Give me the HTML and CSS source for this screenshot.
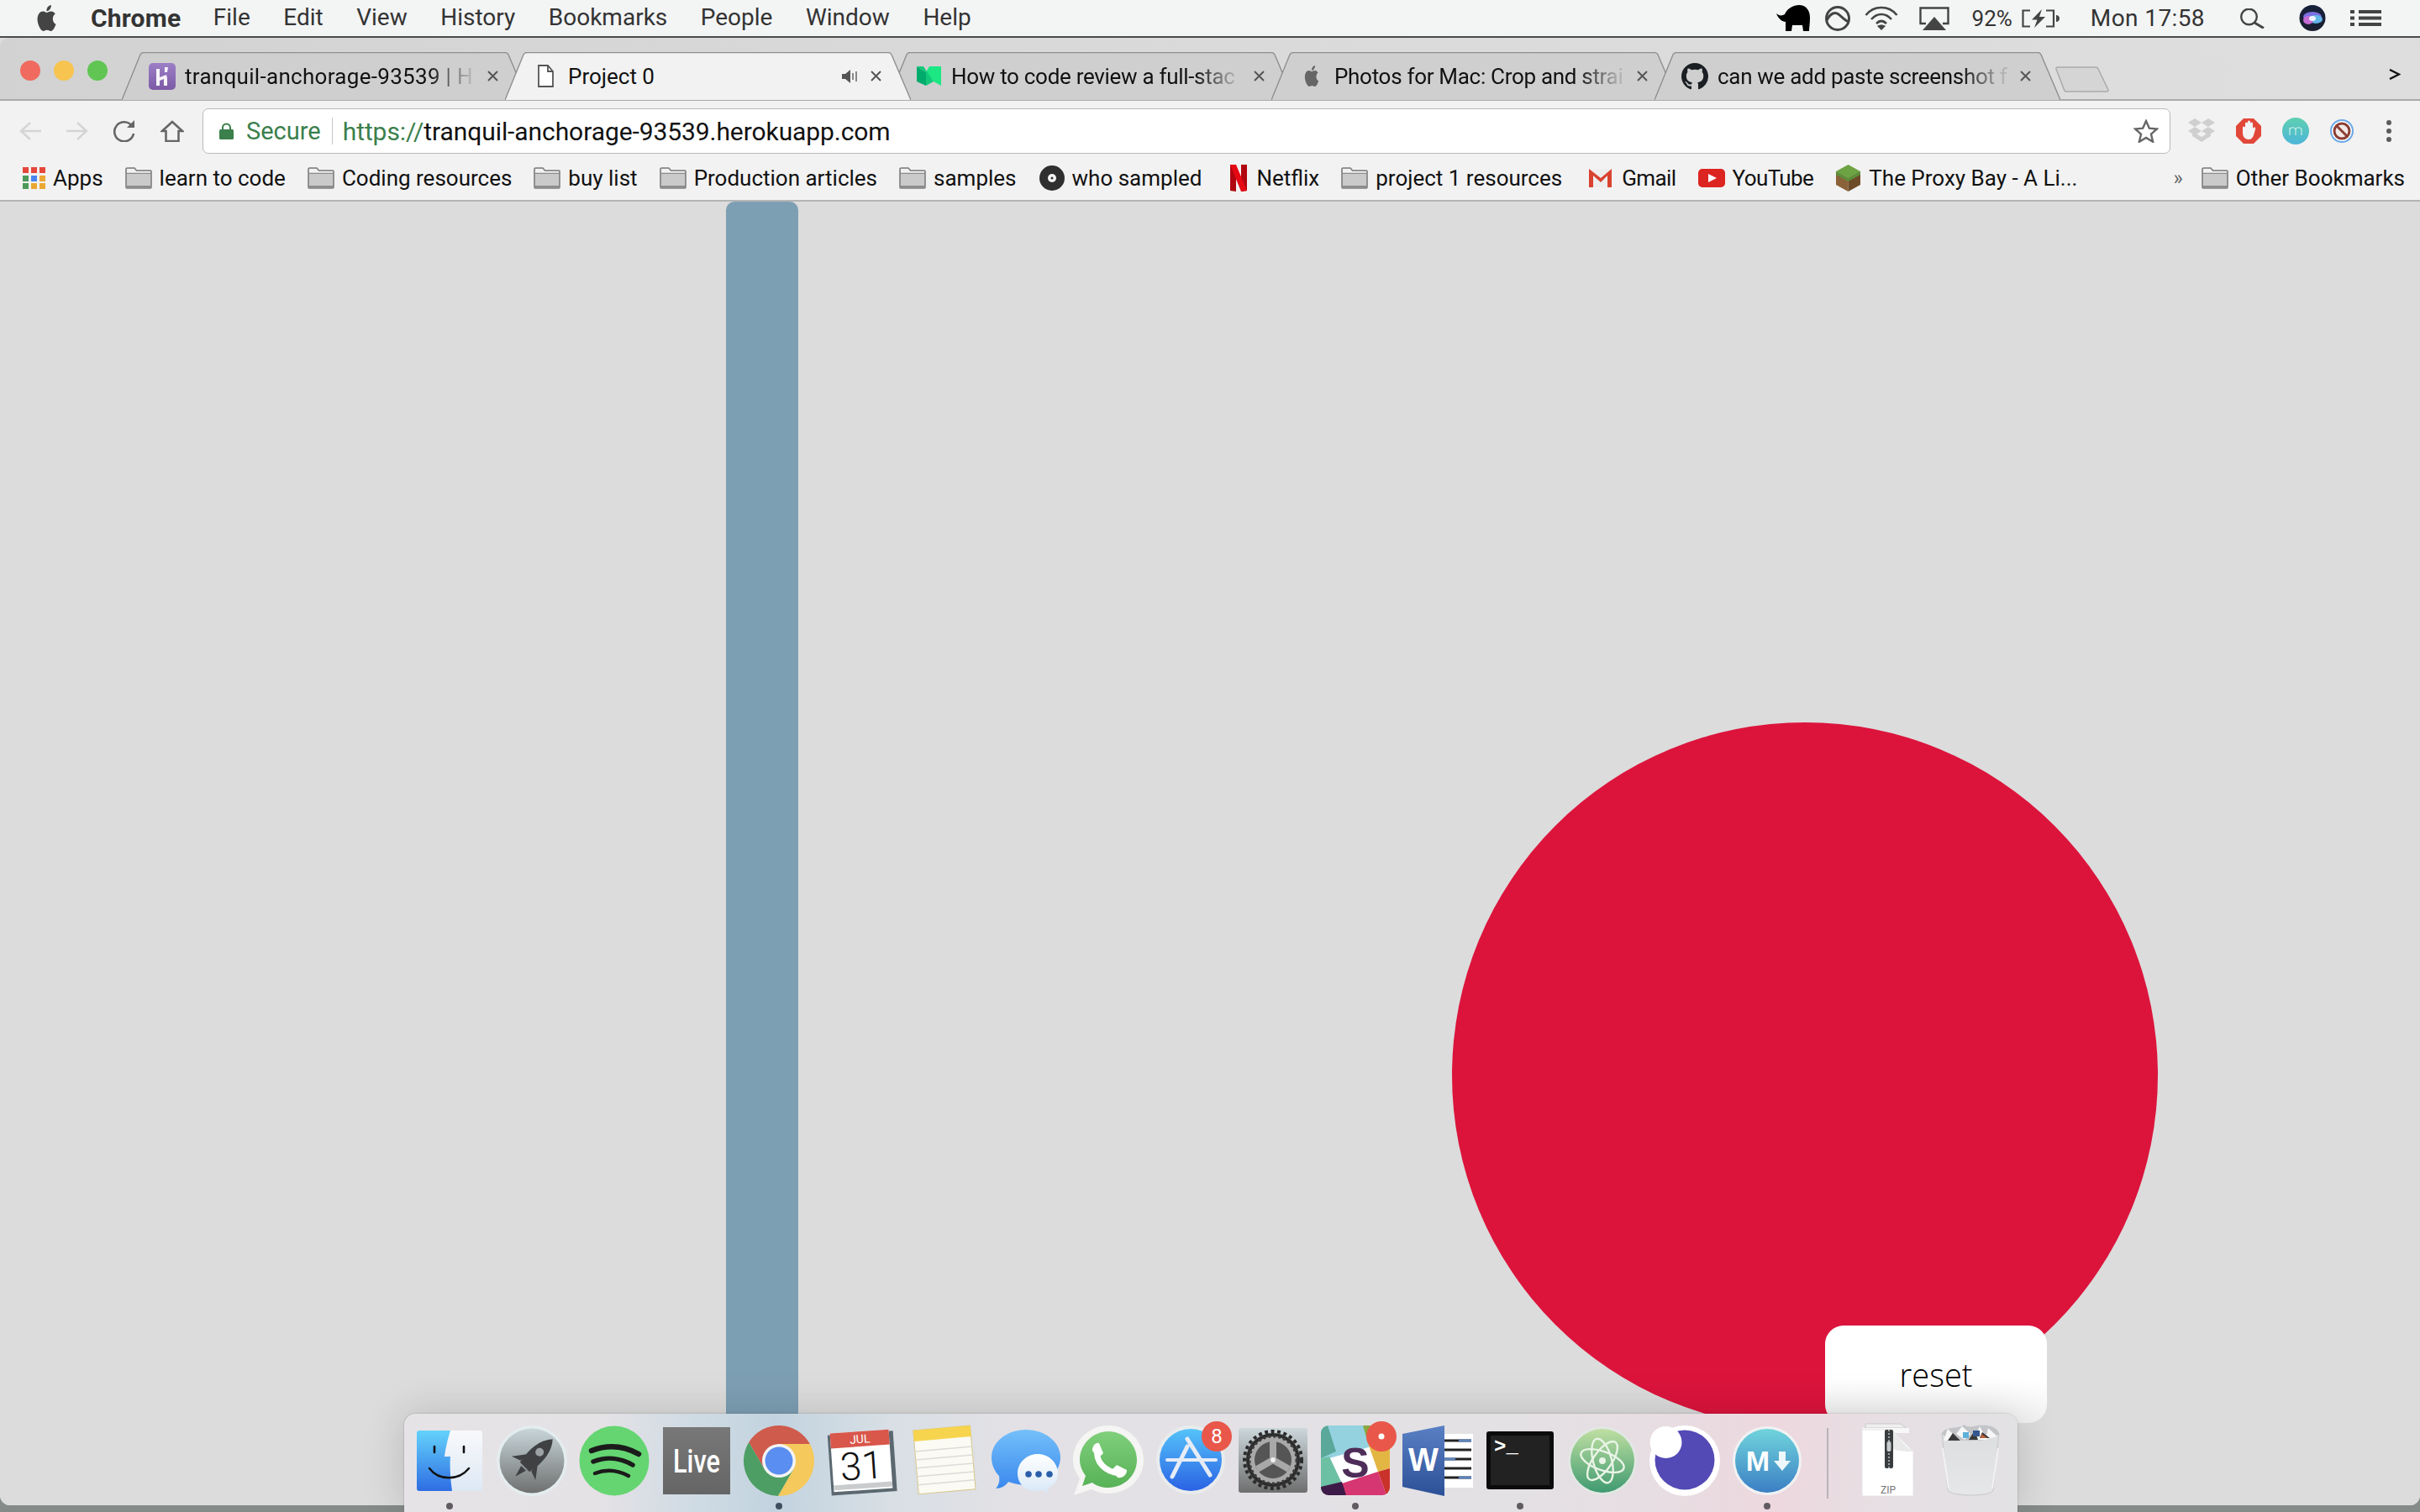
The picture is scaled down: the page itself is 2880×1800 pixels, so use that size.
FILE: index.html
```html
<!DOCTYPE html>
<html lang="en">
<head>
<meta charset="utf-8">
<title>Project 0</title>
<link rel="stylesheet" href="styles.css">
</head>
<body>
<svg class="defs" width="0" height="0">
  <defs>
    <symbol id="folder" viewBox="0 0 32 26">
      <path d="M1 24V2.5C1 1.6 1.6 1 2.5 1H11l2.5 3H30c.6 0 1 .4 1 1v19c0 .6-.4 1-1 1H2c-.6 0-1-.4-1-1z" fill="#cacaca" stroke="#7d7d7d" stroke-width="1.6"/>
      <path d="M2 2h8.6l2.4 3h17v2H2z" fill="#f2f2f2"/>
      <path d="M1.8 7.4h28.4" stroke="#8a8a8a" stroke-width="1.2"/>
      <path d="M2 22h28v2.2H2z" fill="#8c8c8c"/>
    </symbol>
    <symbol id="close" viewBox="0 0 15 15">
      <path d="M2 2l11 11M13 2L2 13" stroke="#555" stroke-width="2" fill="none"/>
    </symbol>
    <linearGradient id="gFinderL" x1="0" y1="0" x2="0" y2="1"><stop offset="0" stop-color="#64d2fb"/><stop offset="1" stop-color="#2e6de3"/></linearGradient>
    <linearGradient id="gFinderR" x1="0" y1="0" x2="0" y2="1"><stop offset="0" stop-color="#f8f9fb"/><stop offset="1" stop-color="#dde8f5"/></linearGradient>
    <linearGradient id="gRocket" x1="0" y1="0" x2="0" y2="1"><stop offset="0" stop-color="#c8d6d9"/><stop offset="1" stop-color="#6f7070"/></linearGradient>
    <linearGradient id="gLive" x1="0" y1="0" x2="0" y2="1"><stop offset="0" stop-color="#787878"/><stop offset="1" stop-color="#656565"/></linearGradient>
    <linearGradient id="gMsg" x1="0" y1="0" x2="0" y2="1"><stop offset="0" stop-color="#75c0fa"/><stop offset="1" stop-color="#3a88ee"/></linearGradient>
    <linearGradient id="gMsgW" x1="0" y1="0" x2="0" y2="1"><stop offset="0" stop-color="#fff"/><stop offset="1" stop-color="#d8e8f8"/></linearGradient>
    <linearGradient id="gWa" x1="0" y1="0" x2="0" y2="1"><stop offset="0" stop-color="#80cf7c"/><stop offset="1" stop-color="#57b256"/></linearGradient>
    <linearGradient id="gStore" x1="0" y1="0" x2="0" y2="1"><stop offset="0" stop-color="#55c3fa"/><stop offset="1" stop-color="#2a62e4"/></linearGradient>
    <linearGradient id="gPrefs" x1="0" y1="0" x2="0" y2="1"><stop offset="0" stop-color="#cdd8dc"/><stop offset="1" stop-color="#6e6e6e"/></linearGradient>
    <linearGradient id="gWord" x1="0" y1="0" x2="0" y2="1"><stop offset="0" stop-color="#5a80c4"/><stop offset="1" stop-color="#2c5097"/></linearGradient>
    <linearGradient id="gAtom" x1="0" y1="0" x2="0" y2="1"><stop offset="0" stop-color="#bfdfa2"/><stop offset="1" stop-color="#3f9a70"/></linearGradient>
    <linearGradient id="gMd" x1="0" y1="0" x2="0" y2="1"><stop offset="0" stop-color="#70d4dc"/><stop offset="1" stop-color="#3b7fc4"/></linearGradient>
    <linearGradient id="gTrash" x1="0" y1="0" x2="0" y2="1"><stop offset="0" stop-color="#dcdddf"/><stop offset="1" stop-color="#e6e7e8"/></linearGradient>
    <linearGradient id="gHeroku" x1="0" y1="0" x2="0" y2="1"><stop offset="0" stop-color="#9c7fc6"/><stop offset="1" stop-color="#7c5aa6"/></linearGradient>
    <linearGradient id="gTeal" x1="0" y1="0" x2="0" y2="1"><stop offset="0" stop-color="#5fcfb0"/><stop offset="1" stop-color="#4cb6d8"/></linearGradient>
    <linearGradient id="gSiri" x1="0" y1="0" x2="0" y2="1"><stop offset="0" stop-color="#15203a"/><stop offset="1" stop-color="#1b1f30"/></linearGradient>
    <clipPath id="slackClip"><rect x="4" y="3" width="82" height="83" rx="9"/></clipPath>
  </defs>
</svg>

<header class="menubar">
  <svg class="apple" width="27" height="31" viewBox="0 0 24 24" preserveAspectRatio="none"><path fill="#444" d="M12.152 6.896c-.948 0-2.415-1.078-3.96-1.04-2.04.027-3.91 1.183-4.961 3.014-2.117 3.675-.546 9.103 1.519 12.09 1.013 1.454 2.208 3.09 3.792 3.039 1.52-.065 2.09-.987 3.935-.987 1.831 0 2.35.987 3.96.948 1.637-.026 2.676-1.48 3.676-2.948 1.156-1.688 1.636-3.325 1.662-3.415-.039-.013-3.182-1.221-3.22-4.857-.026-3.04 2.48-4.494 2.597-4.559-1.429-2.09-3.623-2.324-4.39-2.376-2-.156-3.675 1.09-4.61 1.09zM15.53 3.83c.843-1.012 1.4-2.427 1.245-3.83-1.207.052-2.662.805-3.532 1.818-.78.896-1.454 2.338-1.273 3.714 1.338.104 2.715-.688 3.559-1.701"/></svg>
  <nav class="menu">
    <span class="menu-app">Chrome</span><span>File</span><span>Edit</span><span>View</span><span>History</span><span>Bookmarks</span><span>People</span><span>Window</span><span>Help</span>
  </nav>
  <div class="status">
    <svg width="40" height="31" viewBox="0 0 40 31"><path d="M0 10C3 13 7 13 10 11 13 4 20 0 27 0 35 0 40 6 40 15 40 22 39 27 39 31H32L31 24H19L18 31H11V20C7 20 2 16 0 10Z"/></svg>
    <svg class="st-18" width="30" height="30" viewBox="0 0 30 30"><circle cx="15" cy="15" r="13.5" fill="none" stroke="#444" stroke-width="3"/><path d="M2 17C7 8 12 7 16 10S24 18 28 19" fill="none" stroke="#444" stroke-width="3"/></svg>
    <svg class="st-17" width="40" height="29" viewBox="0 0 40 29"><g fill="none" stroke="#444" stroke-width="2.6"><path d="M1.5 11C11-1 29-1 38.5 11"/><path d="M8 16C15 8 25 8 32 16"/><path d="M14 21C18 17 22 17 26 21"/></g><path d="M20 29l-5-5c3-2 7-2 10 0z" fill="#444"/></svg>
    <svg class="st-25" width="36" height="28" viewBox="0 0 36 28"><path d="M8 20H1.500V1.500H34.500V20H28" fill="none" stroke="#444" stroke-width="2.400"/><path d="M18 12L32 28H4z" fill="#444"/></svg>
    <span class="st-27 st-batt">92%</span>
    <svg class="st-11" width="45" height="22" viewBox="0 0 45 22"><path d="M10 1.500H1.500V20.500H10M29 1.500H38V20.500H29" fill="none" stroke="#444" stroke-width="2.200"/><path d="M24 0L12 12.500H18.500L15 22 28 9H21z" fill="#444"/><path d="M41 7c2.500 0 4 2 4 4s-1.500 4-4 4z" fill="#444"/></svg>
    <span class="st-37 clock">Mon 17:58</span>
    <svg class="st-42" width="29" height="24" viewBox="0 0 29 24"><circle cx="10.500" cy="10" r="9.300" fill="none" stroke="#444" stroke-width="2.400"/><path d="M17 17L28 23.500" stroke="#444" stroke-width="3"/></svg>
    <svg class="st-41" width="32" height="31" viewBox="0 0 32 31"><circle cx="16" cy="15.500" r="15.500" fill="url(#gSiri)"/><ellipse cx="16" cy="14" rx="11" ry="6" fill="#7a6fe0"/><ellipse cx="20" cy="17" rx="8" ry="5" fill="#63b6e8"/><ellipse cx="11" cy="18" rx="6" ry="5" fill="#c56bd4"/><ellipse cx="16" cy="16" rx="4" ry="3" fill="#eef2ff"/></svg>
    <svg class="st-29" width="37" height="19" viewBox="0 0 37 19"><g fill="#444"><rect width="5" height="4"/><rect y="7.500" width="5" height="4"/><rect y="15" width="5" height="4"/><rect x="10" width="27" height="4"/><rect x="10" y="7.500" width="27" height="4"/><rect x="10" y="15" width="27" height="4"/></g></svg>
  </div>
</header>

<div class="window">
  <div class="tabstrip">
    <div class="lights"><i class="light red"></i><i class="light yellow"></i><i class="light green"></i></div>
    <div class="tabs">
      <div class="tab">
        <svg class="tab-shape" width="483" height="57" viewBox="0 0 483 57"><path d="M0 57L22 3Q23 .6 26 .6H456Q459 .6 460 3L483 57"/></svg>
        <span class="favicon"><svg width="32" height="32" viewBox="0 0 32 32"><rect width="32" height="32" rx="5" fill="url(#gHeroku)"/><path d="M9 7h4v10l8-3 1 4v9h-4v-8l-5 2v6H9zM19 5h4l-1 6h-3z" fill="#fff" opacity=".92"/></svg></span>
        <span class="tab-title">tranquil-anchorage-93539 | H</span>
        <svg class="tab-close" width="15" height="15"><use href="#close"/></svg>
      </div>
      <div class="tab active">
        <svg class="tab-shape" width="483" height="57" viewBox="0 0 483 57"><path d="M0 57L22 3Q23 .6 26 .6H456Q459 .6 460 3L483 57"/></svg>
        <span class="favicon"><svg width="19" height="27" viewBox="0 0 19 27"><path d="M1 1h11l6 7v18H1z" fill="#fff" stroke="#555" stroke-width="1.800"/><path d="M12 1v7h6" fill="none" stroke="#555" stroke-width="1.800"/></svg></span>
        <span class="tab-title solid">Project 0</span>
        <svg class="tab-speaker" width="19" height="18" viewBox="0 0 19 18"><path d="M0 6h4l6-5v16l-6-5H0z" fill="#555"/><path d="M13 5v8M17 3v12" stroke="#888" stroke-width="2"/></svg>
        <svg class="tab-close" width="15" height="15"><use href="#close"/></svg>
      </div>
      <div class="tab narrow">
        <svg class="tab-shape" width="483" height="57" viewBox="0 0 483 57"><path d="M0 57L22 3Q23 .6 26 .6H456Q459 .6 460 3L483 57"/></svg>
        <span class="favicon"><svg width="29" height="23" viewBox="0 0 29 23"><path d="M15 0h14v23l-9-5-9-11z" fill="#1ce783"/><path d="M0 0l11 7v16L0 18z" fill="#00ab6c"/><path d="M0 0h8l12 18-9 5V7z" fill="#12c97a"/></svg></span>
        <span class="tab-title">How to code review a full-stac</span>
        <svg class="tab-close" width="15" height="15"><use href="#close"/></svg>
      </div>
      <div class="tab narrow">
        <svg class="tab-shape" width="483" height="57" viewBox="0 0 483 57"><path d="M0 57L22 3Q23 .6 26 .6H456Q459 .6 460 3L483 57"/></svg>
        <span class="favicon"><svg width="20" height="25" viewBox="0 0 24 24" preserveAspectRatio="none"><path fill="#666" d="M12.152 6.896c-.948 0-2.415-1.078-3.96-1.04-2.04.027-3.91 1.183-4.961 3.014-2.117 3.675-.546 9.103 1.519 12.09 1.013 1.454 2.208 3.09 3.792 3.039 1.52-.065 2.09-.987 3.935-.987 1.831 0 2.35.987 3.96.948 1.637-.026 2.676-1.48 3.676-2.948 1.156-1.688 1.636-3.325 1.662-3.415-.039-.013-3.182-1.221-3.22-4.857-.026-3.04 2.48-4.494 2.597-4.559-1.429-2.09-3.623-2.324-4.39-2.376-2-.156-3.675 1.09-4.61 1.09zM15.53 3.83c.843-1.012 1.4-2.427 1.245-3.83-1.207.052-2.662.805-3.532 1.818-.78.896-1.454 2.338-1.273 3.714 1.338.104 2.715-.688 3.559-1.701"/></svg></span>
        <span class="tab-title">Photos for Mac: Crop and strai</span>
        <svg class="tab-close" width="15" height="15"><use href="#close"/></svg>
      </div>
      <div class="tab narrow">
        <svg class="tab-shape" width="483" height="57" viewBox="0 0 483 57"><path d="M0 57L22 3Q23 .6 26 .6H456Q459 .6 460 3L483 57"/></svg>
        <span class="favicon"><svg width="32" height="32" viewBox="0 0 16 16"><path fill="#1b1f23" d="M8 0C3.58 0 0 3.58 0 8c0 3.54 2.29 6.53 5.47 7.59.4.07.55-.17.55-.38 0-.19-.01-.82-.01-1.49-2.01.37-2.53-.49-2.69-.94-.09-.23-.48-.94-.82-1.13-.28-.15-.68-.52-.01-.53.63-.01 1.08.58 1.23.82.72 1.21 1.87.87 2.33.66.07-.52.28-.87.51-1.07-1.78-.2-3.64-.89-3.64-3.95 0-.87.31-1.59.82-2.15-.08-.2-.36-1.02.08-2.12 0 0 .67-.21 2.2.82.64-.18 1.32-.27 2-.27.68 0 1.36.09 2 .27 1.53-1.04 2.2-.82 2.2-.82.44 1.1.16 1.92.08 2.12.51.56.82 1.27.82 2.15 0 3.07-1.87 3.75-3.65 3.95.29.25.54.73.54 1.48 0 1.07-.01 1.93-.01 2.2 0 .21.15.46.55.38A8.013 8.013 0 0016 8c0-4.42-3.58-8-8-8z"/></svg></span>
        <span class="tab-title">can we add paste screenshot f</span>
        <svg class="tab-close" width="15" height="15"><use href="#close"/></svg>
      </div>
      <svg class="newtab" width="64" height="31" viewBox="0 0 64 31"><path d="M1 3Q.6 1 3 1H48Q50 1 51 3L63 28Q63.500 30 61 30H13Q11 30 10.500 28z" fill="#d5d5d5" stroke="#aaa" stroke-width="1.500"/></svg>
    </div>
    <svg class="tab-more" width="14" height="13" viewBox="0 0 14 13"><path d="M1 1l11 5.500L1 12" fill="none" stroke="#111" stroke-width="2.400"/></svg>
  </div>

  <div class="toolbar">
    <div class="nav">
      <svg width="27" height="24" viewBox="0 0 27 24"><path d="M26 12H3M13 2L2 12l11 10" fill="none" stroke="#d4d4d4" stroke-width="2.400"/></svg>
      <svg width="27" height="24" viewBox="0 0 27 24"><path d="M1 12h23M14 2l11 10-11 10" fill="none" stroke="#d4d4d4" stroke-width="2.400"/></svg>
      <svg width="30" height="26" viewBox="0 0 30 26"><path d="M24 7A11.500 11.500 0 1 0 26 16" fill="none" stroke="#666" stroke-width="2.600"/><path d="M18 9h9V0z" fill="#666"/></svg>
      <svg width="28" height="26" viewBox="0 0 28 26"><path d="M14 2L2 13h4.500v12h15V13H26z" fill="none" stroke="#666" stroke-width="2.600"/></svg>
    </div>
    <div class="omnibox">
      <svg class="lock" width="17" height="20" viewBox="0 0 17 20"><path d="M4 9V6a4.500 4.500 0 0 1 9 0v3" fill="none" stroke="#3b7f4c" stroke-width="2"/><rect y="8" width="17" height="12" rx="1.500" fill="#3b7f4c"/></svg>
      <span class="secure">Secure</span>
      <i class="omni-div"></i>
      <span class="url"><span class="scheme">https://</span>tranquil-anchorage-93539.herokuapp.com</span>
      <svg class="star" width="30" height="28" viewBox="0 0 30 28"><path d="M15 2l3.800 8.600 9.200.9-7 6.200 2.100 9.100L15 22l-8.100 4.800L9 17.700 2 11.500l9.200-.9z" fill="none" stroke="#666" stroke-width="2.400"/></svg>
    </div>
    <div class="exts">
      <svg width="32" height="31" viewBox="0 0 32 31"><path d="M8 0l8 5-8 5-8-5zM24 0l8 5-8 5-8-5zM8 10l8 5-8 5-8-5zM24 10l8 5-8 5-8-5zM16 22l8-5 3 2v2l-11 7-11-7v-2l3-2z" fill="#cfcfcf"/></svg>
      <svg width="30" height="30" viewBox="0 0 30 30"><path d="M9 0h12l9 9v12l-9 9H9l-9-9V9z" fill="#e2483a"/><path d="M8 17V11a1.500 1.500 0 0 1 3 0V6a1.500 1.500 0 0 1 3 0V4a1.500 1.500 0 0 1 3 0v2a1.500 1.500 0 0 1 3 0v6c1-2 4-2 3 1l-2 7c-1 3-3 5-6 5s-7-2-7-8z" fill="#f4f4f4"/></svg>
      <svg width="32" height="32" viewBox="0 0 32 32"><circle cx="16" cy="16" r="16" fill="url(#gTeal)"/><path d="M9 21v-9M9 14c1-3 6-3 7 0v7M16 14c1-3 6-3 7 0v7" fill="none" stroke="#c9efe9" stroke-width="1.200"/></svg>
      <svg width="28" height="28" viewBox="0 0 28 28"><circle cx="14" cy="14" r="13" fill="#fff" stroke="#6aa8e8" stroke-width="2"/><circle cx="14" cy="14" r="9" fill="#f3e9e6" stroke="#8c3f36" stroke-width="3"/><path d="M8 8l12 12" stroke="#8c3f36" stroke-width="3"/></svg>
      <svg class="ext-menu" width="12" height="26" viewBox="0 0 12 26"><g fill="#5c5c5c"><circle cx="6" cy="3" r="3"/><circle cx="6" cy="13" r="3"/><circle cx="6" cy="23" r="3"/></g></svg>
    </div>
  </div>

  <div class="bookmarks">
    <div class="bm">
      <svg width="27" height="26" viewBox="0 0 27 26"><g><rect width="7" height="7" fill="#e5483b"/><rect x="10" width="7" height="7" fill="#e5483b"/><rect x="20" width="7" height="7" fill="#e5483b"/><rect y="10" width="7" height="7" fill="#4d9a5a"/><rect x="10" y="10" width="7" height="7" fill="#4a85ee"/><rect x="20" y="10" width="7" height="7" fill="#eaa832"/><rect y="19" width="7" height="7" fill="#4d9a5a"/><rect x="10" y="19" width="7" height="7" fill="#eaa832"/><rect x="20" y="19" width="7" height="7" fill="#eaa832"/></g></svg>
      <span>Apps</span>
    </div>
    <div class="bm"><svg width="32" height="26"><use href="#folder"/></svg><span>learn to code</span></div>
    <div class="bm"><svg width="32" height="26"><use href="#folder"/></svg><span>Coding resources</span></div>
    <div class="bm"><svg width="32" height="26"><use href="#folder"/></svg><span>buy list</span></div>
    <div class="bm"><svg width="32" height="26"><use href="#folder"/></svg><span>Production articles</span></div>
    <div class="bm"><svg width="32" height="26"><use href="#folder"/></svg><span>samples</span></div>
    <div class="bm"><svg width="31" height="30" viewBox="1 0 31 30"><circle cx="17" cy="15" r="15" fill="#2f2f2f"/><circle cx="17" cy="15" r="5" fill="#f4f4f4"/><circle cx="17" cy="15" r="1.500" fill="#333"/></svg><span>who sampled</span></div>
    <div class="bm"><svg width="30" height="32" viewBox="0 0 30 32"><path d="M8 0h7v32l-7-1z" fill="#b1060f"/><path d="M21 0h7v31l-7 1z" fill="#b1060f"/><path d="M8 0h7l13 31-7 1z" fill="#e50914"/></svg><span>Netflix</span></div>
    <div class="bm"><svg width="32" height="26"><use href="#folder"/></svg><span>project 1 resources</span></div>
    <div class="bm tight"><svg width="36" height="22" viewBox="-3 0 36 22"><path d="M3 0h27v22H3z" fill="#eee"/><path d="M3 0v22h5V8l9 8 8-8v14h5V0l-13 11z" fill="#d9432f"/></svg><span>Gmail</span></div>
    <div class="bm tight"><svg width="32" height="22" viewBox="0 0 32 22"><rect width="32" height="22" rx="5" fill="#dc2420"/><path d="M12 6l10 5-10 5z" fill="#fff"/></svg><span>YouTube</span></div>
    <div class="bm"><svg width="31" height="32" viewBox="0 0 31 32"><path d="M15.500 0L30 8 15.500 16 1 8z" fill="#6da342"/><path d="M1 8l14.500 8v16L1 24z" fill="#8a6239"/><path d="M30 8l-14.500 8v16L30 24z" fill="#6d4a28"/><path d="M1 8l14.500 8L30 8v4l-14.500 8L1 12z" fill="#5d8e38"/></svg><span>The Proxy Bay - A Li...</span></div>
    <div class="bm-end">
      <span class="chev">»</span>
      <div class="bm"><svg width="32" height="26"><use href="#folder"/></svg><span>Other Bookmarks</span></div>
    </div>
  </div>

  <main class="page">
    <div class="slider"></div>
    <div class="ball"></div>
    <button class="reset">reset</button>
  </main>
</div>

<footer class="dock">
  <div class="dock-item">
    <svg width="90" height="90" viewBox="0 0 90 90"><rect x="6" y="9" width="78" height="72" rx="3" fill="url(#gFinderR)"/><path d="M9 9H46C42 22 40 32 39 40H46C45 52 46 66 48 81H9a3 3 0 0 1-3-3V12a3 3 0 0 1 3-3z" fill="url(#gFinderL)"/><path d="M27 28v7M62 28v7" stroke="#111" stroke-width="2.600" stroke-linecap="round"/><path d="M21 54C32 69 56 69 68 54" fill="none" stroke="#111" stroke-width="2.400" stroke-linecap="round"/></svg>
    <i class="dot"></i>
  </div>
  <div class="dock-item">
    <svg width="90" height="90" viewBox="0 0 90 90"><circle cx="45" cy="45" r="42" fill="#e4edee"/><circle cx="45" cy="45" r="38.500" fill="url(#gRocket)"/><g transform="translate(45 44) rotate(45)"><path d="M0-35C10-24 12-8 8 12H-8C-12-8-10-24 0-35z" fill="#3f4143"/><path d="M-8-2L-20 14-9 10zM8-2L20 14 9 10z" fill="#3f4143"/><path d="M-4 14H4L0 28z" fill="#3f4143"/><circle cy="-13" r="5" fill="#9da2a5"/></g></svg>
    <i class="dot none"></i>
  </div>
  <div class="dock-item">
    <svg width="90" height="90" viewBox="0 0 90 90"><circle cx="45" cy="45" r="41.500" fill="#65d572"/><g fill="none" stroke="#1b1b1b" stroke-linecap="round"><path d="M18 33C36 26 56 27 74 37" stroke-width="6.500"/><path d="M20 46C35 40 52 41 67 50" stroke-width="5.500"/><path d="M22 60C35 55 49 56 62 63" stroke-width="4.500"/></g></svg>
    <i class="dot none"></i>
  </div>
  <div class="dock-item">
    <svg width="90" height="90" viewBox="0 0 90 90"><rect x="5" y="5" width="80" height="80" fill="url(#gLive)"/><text class="live" x="17" y="59" textLength="56" lengthAdjust="spacingAndGlyphs">Live</text></svg>
    <i class="dot none"></i>
  </div>
  <div class="dock-item">
    <svg width="90" height="90" viewBox="0 0 90 90"><path d="M81.900 25A42 42 0 0 0 9.200 23L27.700 55 45 45V25z" fill="#cf5b4c"/><path d="M43.900 87A42 42 0 0 0 81.900 25H45L62.300 55z" fill="#f5c95b"/><path d="M9.200 23A42 42 0 0 0 43.900 87L62.300 55H27.700z" fill="#4d9e64"/><circle cx="45" cy="45" r="20" fill="#f4f4f4"/><circle cx="45" cy="45" r="16.500" fill="#5a8ef0"/></svg>
    <i class="dot dark"></i>
  </div>
  <div class="dock-item">
    <svg width="90" height="90" viewBox="0 0 90 90"><g transform="rotate(-4 45 45)"><rect x="7" y="12" width="78" height="72" fill="#5b6870"/><rect x="10" y="10" width="70" height="70" fill="#fff"/><rect x="10" y="72" width="70" height="6" fill="#c9cbcd"/><rect x="10" y="10" width="70" height="18" fill="#d9564b"/><text class="cal-m" x="45" y="24" text-anchor="middle">JUL</text><text class="cal-d" x="45" y="67" text-anchor="middle">31</text></g></svg>
    <i class="dot none"></i>
  </div>
  <div class="dock-item">
    <svg width="90" height="90" viewBox="0 0 90 90"><g transform="rotate(-5 45 45)"><rect x="12" y="6" width="68" height="76" fill="#fbfaf3" stroke="#d6c68b"/><rect x="12" y="6" width="68" height="13" fill="#f7d44d"/><path d="M12 31H80M12 41H80M12 51H80M12 61H80M12 71H80" stroke="#dcdcd8" stroke-width="1.500"/></g></svg>
    <i class="dot none"></i>
  </div>
  <div class="dock-item">
    <svg width="90" height="90" viewBox="0 0 90 90"><path d="M45 8C67 8 86 22 86 41S67 74 45 74C38 74 30 72 24 70 21 75 15 78 9 78 13 74 14 68 13 63 7 57 4 49 4 41 4 22 23 8 45 8z" fill="url(#gMsg)"/><path d="M59 37C72 37 83 47 83 60 83 70 76 76 70 78L73 83C68 82 65 81 62 80 47 84 35 74 35 60 35 47 46 37 59 37z" fill="url(#gMsgW)"/><g fill="#2a5ea8"><circle cx="48" cy="61" r="3.800"/><circle cx="60" cy="61" r="3.800"/><circle cx="73" cy="61" r="3.800"/></g></svg>
    <i class="dot none"></i>
  </div>
  <div class="dock-item">
    <svg width="90" height="90" viewBox="0 0 90 90"><path d="M45 3C68 3 87 21 87 44S68 84 45 84C38 84 31 82 25 79L4 86 11 66C6 59 3 52 3 44 3 21 22 3 45 3z" fill="#f5f5f3"/><path d="M45 10C63 10 79 25 79 44S63 77 45 77C38 77 31 75 26 71L14 75 18 63C14 57 11 51 11 44 11 25 27 10 45 10z" fill="url(#gWa)"/><path d="M32 31C29 46 41 58 58 60" fill="none" stroke="#fff" stroke-width="7"/><path d="M26 33C26 27 30 23 34 24L39 36 33 42zM49 56L55 50 67 56C67 62 62 66 56 65z" fill="#fff"/></svg>
    <i class="dot none"></i>
  </div>
  <div class="dock-item">
    <svg class="over" width="90" height="90" viewBox="0 0 90 90"><circle cx="45" cy="44" r="41" fill="#e9eced"/><circle cx="45" cy="44" r="37" fill="url(#gStore)"/><g fill="none" stroke="#e6ecf6" stroke-linecap="round"><path d="M41 19L68 62" stroke-width="5"/><path d="M41 28L23 64" stroke-width="5"/><path d="M17 44H75" stroke-width="4"/></g><circle cx="76" cy="16" r="18" fill="#e9574a"/><text class="badge" x="76" y="24" text-anchor="middle">8</text></svg>
    <i class="dot none"></i>
  </div>
  <div class="dock-item">
    <svg width="90" height="90" viewBox="0 0 90 90"><rect x="4" y="6" width="82" height="77" rx="3" fill="url(#gPrefs)"/><circle cx="45" cy="44" r="32" fill="#2c2c2c"/><circle cx="45" cy="44" r="34" fill="none" stroke="#2c2c2c" stroke-width="4" stroke-dasharray="4 3.500"/><circle cx="45" cy="44" r="28" fill="#a9a9a9"/><circle cx="45" cy="44" r="28" fill="none" stroke="#3a3a3a" stroke-width="3" stroke-dasharray="3 3"/><circle cx="45" cy="44" r="22" fill="#555"/><g stroke="#a8a8a8" stroke-width="8"><path d="M45 44V22M45 44L26 55M45 44L64 55"/></g><circle cx="45" cy="44" r="3" fill="#efefef"/></svg>
    <i class="dot none"></i>
  </div>
  <div class="dock-item">
    <svg class="over" width="90" height="90" viewBox="0 0 90 90"><g clip-path="url(#slackClip)"><rect x="4" y="3" width="82" height="83" fill="#fff"/><path d="M4 3H56L64 28 14 42 4 44z" fill="#94d2e0"/><path d="M4 3H12L22 34 4 42z" fill="#5aa89a"/><path d="M4 42L14 40 29 72 4 86z" fill="#6cc0a4"/><path d="M54 3H86V18L60 24z" fill="#8aa83f"/><path d="M60 24L86 18V54L72 58z" fill="#e3b543"/><path d="M29 72L72 58 82 86H33z" fill="#d63672"/><path d="M4 86V76L29 70 34 86z" fill="#3d1a48"/><path d="M72 58L86 54V86H82z" fill="#c9322a"/></g><text class="slack" x="45" y="65" text-anchor="middle">S</text><circle cx="76" cy="16" r="18" fill="#e9574a"/><circle cx="76" cy="16" r="3.500" fill="#fff"/></svg>
    <i class="dot"></i>
  </div>
  <div class="dock-item">
    <svg width="90" height="90" viewBox="0 0 90 90"><rect x="50" y="13" width="37" height="64" fill="#fff"/><path d="M53 21H85M53 32H85M53 43H85M53 54H85M53 65H85" stroke="#222" stroke-width="3"/><path d="M70 21H85M53 43H66M70 65H85" stroke="#5c83bd" stroke-width="3"/><path d="M3 13L53 3V87L3 76z" fill="url(#gWord)"/><text class="word" x="28" y="57" text-anchor="middle">W</text></svg>
    <i class="dot none"></i>
  </div>
  <div class="dock-item">
    <svg width="90" height="90" viewBox="0 0 90 90"><rect x="5" y="10" width="80" height="69" rx="3" fill="#0b0b0b"/><rect x="10" y="15" width="70" height="59" fill="#222"/><text class="term" x="14" y="35">&gt;_</text></svg>
    <i class="dot"></i>
  </div>
  <div class="dock-item">
    <svg width="90" height="90" viewBox="0 0 90 90"><circle cx="45" cy="45" r="41" fill="#e2e7e3"/><circle cx="45" cy="45" r="38" fill="url(#gAtom)"/><g fill="none" stroke="#e9f4e6" stroke-width="2.400"><ellipse cx="45" cy="45" rx="27" ry="11" transform="rotate(20 45 45)"/><ellipse cx="45" cy="45" rx="27" ry="11" transform="rotate(75 45 45)"/><ellipse cx="45" cy="45" rx="27" ry="11" transform="rotate(125 45 45)"/></g><circle cx="45" cy="45" r="4" fill="#e9f4e6"/></svg>
    <i class="dot none"></i>
  </div>
  <div class="dock-item">
    <svg width="90" height="90" viewBox="0 0 90 90"><circle cx="45" cy="45" r="42" fill="#fff"/><circle cx="45" cy="44" r="35.500" fill="#534ab5"/><circle cx="22.500" cy="23" r="19" fill="#fff"/></svg>
    <i class="dot none"></i>
  </div>
  <div class="dock-item">
    <svg width="90" height="90" viewBox="0 0 90 90"><circle cx="45" cy="45" r="41" fill="#f0f2f3"/><circle cx="45" cy="45" r="38" fill="url(#gMd)"/><text class="md" x="34" y="57" text-anchor="middle">M</text><path d="M59 34H67V45H73L63 57 53 45H59z" fill="#eef8fb"/></svg>
    <i class="dot"></i>
  </div>
  <i class="dock-sep"></i>
  <div class="dock-item">
    <svg width="90" height="90" viewBox="0 0 90 90"><path d="M18 1H60L66 6H18z" fill="#efefef" stroke="#c9c9c9"/><path d="M14 6H70V12H14z" fill="#f7f7f7"/><path d="M14 8H49L75 34V87H14z" fill="#fff" stroke="#e4e4e4"/><path d="M49 8V26C49 32 56 34 75 34L67 28 49 8z" fill="#e9e9e9"/><rect x="41" y="8" width="10" height="46" rx="2" fill="#3a3d40"/><path d="M46 8V54" stroke="#a0a3a6" stroke-width="2" stroke-dasharray="2 2"/><rect x="43.500" y="22" width="5" height="12" rx="2" fill="#c9cccf"/><text class="zip" x="45" y="84" text-anchor="middle">ZIP</text></svg>
    <i class="dot none"></i>
  </div>
  <div class="dock-item">
    <svg width="90" height="90" viewBox="0 0 90 90"><path d="M11 12C25 6 65 6 79 12L72 80C70 88 22 88 18 80z" fill="url(#gTrash)" stroke="#c6c7c9"/><path d="M12 30L19 78M78 30L71 78" stroke="#f2f2f3" stroke-width="2"/><path d="M11 13C14 3 30 8 38 2 44 8 52 1 60 3 68 2 78 6 79 13 70 24 22 24 11 13z" fill="#c3c4c7"/><path d="M18 7l14 14H13zM35 4l10 9-7 7-10-7zM49 20l7-16 9 16zM66 6l11 10-14 4z" fill="#f7f7f7"/><path d="M24 12l9 9H18zM43 20l7-11 4 11zM59 11l9 7H56z" fill="#3a3a3a"/><path d="M36 11h7v7h-7z" fill="#5fb0d8"/><path d="M48 9h8v7h-8z" fill="#34588f"/><path d="M58 13l7 5h-8z" fill="#c0623a"/></svg>
    <i class="dot none"></i>
  </div>
</footer>
</body>
</html>
```
FILE: styles.css
```css
* { box-sizing: border-box; }
html, body { margin: 0; height: 1800px; overflow: hidden; }
body { position: relative; background: #858b88; font-family: Roboto, "Liberation Sans", sans-serif; color: #111; }
.defs { position: absolute; }
svg { display: block; flex: none; }

.menubar { height: 45px; display: flex; align-items: center; background: #f3f5f5; border-bottom: 2px solid #4a4a4a; font-size: 28px; color: #333; padding-left: 42px; padding-right: 46px; }
.menu { display: flex; gap: 39.500px; margin-left: 39px; }
.menu-app { font-weight: 700; font-size: 30px; letter-spacing: .2px; margin-right: -1px; }
.status { display: flex; align-items: center; margin-left: auto; }
.st-11 { margin-left: 11px; } .st-17 { margin-left: 17px; } .st-18 { margin-left: 18px; }
.st-25 { margin-left: 25px; } .st-27 { margin-left: 27px; } .st-29 { margin-left: 29px; }
.st-37 { margin-left: 37px; } .st-41 { margin-left: 41px; } .st-42 { margin-left: 42px; }
.st-batt { font-size: 26px; }
.clock { letter-spacing: .4px; }

.window { height: 1747px; background: #dcdcdc; border-radius: 0 0 12px 12px; overflow: hidden; }

.tabstrip { height: 75px; display: flex; align-items: flex-end; position: relative; background: linear-gradient(90deg, #d2d2d2, #d9d9d9 40%, #dedede); border-bottom: 2px solid #aaa; border-radius: 12px 12px 0 0; }
.lights { position: absolute; left: 24px; top: 27px; display: flex; gap: 16px; }
.light { width: 24px; height: 24px; border-radius: 50%; }
.red { background: #f06a5f; } .yellow { background: #f7c44f; } .green { background: #61c554; }
.tabs { display: flex; padding-left: 145px; margin-bottom: -1px; align-items: flex-end; }
.tab { position: relative; width: 483px; height: 57px; margin-right: -27px; display: flex; align-items: center; padding: 0 34px 0 32px; font-size: 26px; letter-spacing: .3px; z-index: 1; }
.tab.narrow { letter-spacing: -.3px; }
.tab.active { z-index: 2; }
.tab-shape { position: absolute; left: 0; top: 0; z-index: -1; }
.tab-shape path { fill: #cfcfcf; stroke: #8f8f8f; stroke-width: 1.400; }
.active .tab-shape path { fill: #f2f2f2; }
.favicon { width: 32px; display: flex; justify-content: center; flex: none; }
.tab-title { flex: 1; min-width: 0; margin-left: 11px; white-space: nowrap; overflow: hidden; -webkit-mask-image: linear-gradient(90deg, #000 84%, rgba(0,0,0,.15) 98%); mask-image: linear-gradient(90deg, #000 84%, rgba(0,0,0,.15) 98%); }
.tab-title.solid { -webkit-mask-image: none; mask-image: none; letter-spacing: 0; }
.tab-close { margin-left: 14px; }
.newtab { margin-left: 21px; margin-bottom: 9px; position: relative; z-index: 0; }
.tab-more { position: absolute; left: 2843px; top: 37px; }

.toolbar { height: 64px; display: flex; background: #f2f2f2; padding: 9px 0 1px 23px; }
.nav { display: flex; gap: 28px; align-items: center; width: 218px; flex: none; }
.omnibox { flex: 1; height: 54px; background: #fff; border: 1.500px solid #b9b9b9; border-radius: 7px; display: flex; align-items: center; padding: 0 13px 0 19px; }
.lock { margin-right: 15px; }
.secure { font-size: 29px; color: #3b7f4c; }
.omni-div { width: 1px; height: 32px; background: #c4c4c4; margin: 0 12px 0 13px; }
.url { font-size: 30px; letter-spacing: -.08px; color: #111; white-space: nowrap; }
.scheme { color: #3b7f4c; }
.star { margin-left: auto; }
.exts { width: 297px; flex: none; display: flex; align-items: center; gap: 25px; padding-left: 21px; }
.ext-menu { margin-left: 11px; }

.bookmarks { height: 56px; display: flex; align-items: center; gap: 26px; background: #f2f2f2; padding: 2px 18px 0 27px; border-bottom: 2px solid #b5b5b5; font-size: 26px; white-space: nowrap; }
.bm { display: flex; align-items: center; gap: 9px; }
.tight { letter-spacing: -.6px; }
.bm-end { margin-left: auto; display: flex; align-items: center; gap: 22px; }
.chev { color: #666; font-size: 24px; }

.page { position: relative; height: 1552px; background: #dcdcdc; }
.slider { position: absolute; left: 864px; top: 0; width: 86px; height: 1500px; background: #7d9fb4; border-radius: 10px 10px 0 0; }
.ball { position: absolute; left: 1728px; top: 620px; width: 840px; height: 840px; border-radius: 50%; background: #dc143c; }
.reset { position: absolute; left: 2172px; top: 1338px; width: 264px; height: 116px; border: 0; border-radius: 22px; background: linear-gradient(#fff 55%, #f1f1f1); font-family: "Open Sans", sans-serif; font-weight: 300; font-size: 38px; color: #000; padding: 0; }

.dock { position: absolute; left: 481px; top: 1683px; width: 1920px; height: 117px; padding: 11px 0 0 5px; display: flex; align-items: flex-start; border-radius: 14px 14px 0 0; background: linear-gradient(90deg, #e6e3e6 0%, #e5e2e5 12%, #cfdbe4 18%, #c2d3df 23%, #d8dfe5 30%, #e3e1e5 38%, #e3e1e4 68%, #e7dde2 78%, #edd8df 85%, #e6dfe3 92%, #e2e1e3 100%); box-shadow: 0 0 50px rgba(0,0,0,.16), 0 0 2px rgba(0,0,0,.3); }
.dock-item { width: 98px; display: flex; flex-direction: column; align-items: center; flex: none; }
.dock-item svg { overflow: visible; }
.dot { width: 8px; height: 8px; border-radius: 50%; background: #615c61; margin-top: 5px; }
.dot.dark { background: #3f4f5f; }
.dot.none { visibility: hidden; }
.dock-sep { width: 46px; flex: none; height: 84px; margin-top: 6px; background: linear-gradient(#b9b3b8, #b9b3b8) center / 2px 100% no-repeat; }

.live { font-family: Roboto, sans-serif; font-weight: 500; font-size: 38px; fill: #fff; }
.cal-m { font-family: Roboto, sans-serif; font-size: 14px; fill: #fff; }
.cal-d { font-family: Roboto, sans-serif; font-weight: 300; font-size: 46px; fill: #111; }
.badge { font-family: Roboto, sans-serif; font-size: 24px; fill: #fff; }
.slack { font-family: "Liberation Sans", sans-serif; font-weight: 700; font-size: 50px; fill: #4d2d58; }
.word { font-family: "Liberation Sans", sans-serif; font-weight: 700; font-size: 38px; fill: #fff; }
.term { font-family: "Liberation Mono", monospace; font-weight: 700; font-size: 24px; fill: #fff; }
.md { font-family: "Liberation Sans", sans-serif; font-weight: 700; font-size: 34px; fill: #fff; }
.zip { font-family: Roboto, sans-serif; font-size: 12px; fill: #777; }
```
